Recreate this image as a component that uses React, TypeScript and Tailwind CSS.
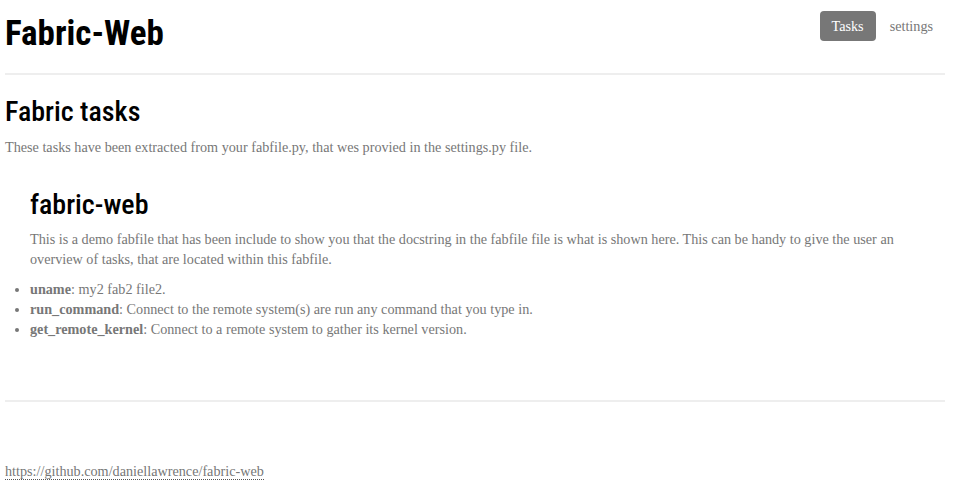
const tasks = [
  { name: "uname", doc: "my2 fab2 file2." },
  { name: "run_command", doc: "Connect to the remote system(s) are run any command that you type in." },
  { name: "get_remote_kernel", doc: "Connect to a remote system to gather its kernel version." },
];

const heading = "font-['Roboto',sans-serif] font-stretch-condensed text-black";

export default function App() {
  return (
    <div className="min-h-[484px] bg-white">
      <div className="ml-[5px] w-[940px] font-['Liberation_Serif',serif] text-[14.2px] leading-[20px] text-[#777]">
        {/* header */}
        <div className="flex items-start justify-between">
          <h1 className={`${heading} mt-[14px] text-[35px] font-bold leading-[40px]`}>Fabric-Web</h1>
          <ul className="mt-[11px] flex gap-[2px]">
            <li>
              <a className="flex h-[30px] items-center rounded-[4px] bg-[#777] px-3 text-white">Tasks</a>
            </li>
            <li>
              <a className="flex h-[30px] items-center rounded-[4px] px-3 text-[#777]">settings</a>
            </li>
          </ul>
        </div>
        <div className="mt-[19px] h-[2px] bg-[#eee]" />

        {/* tasks */}
        <h2 className={`${heading} mt-[20px] mb-[9px] text-[28px] font-medium leading-[33px]`}>Fabric tasks</h2>
        <p>These tasks have been extracted from your fabfile.py, that wes provied in the settings.py file.</p>

        <div className="mt-[31px] pl-[25px]">
          <h2 className={`${heading} mb-[8px] text-[28px] font-medium leading-[33px]`}>fabric-web</h2>
          <p className="mb-[10px]">
            This is a demo fabfile that has been include to show you that the docstring in the fabfile file is what is
            shown here. This can be handy to give the user an overview of tasks, that are located within this fabfile.
          </p>
        </div>
        <ul className="list-disc pl-[25px]">
          {tasks.map((t) => (
            <li key={t.name}>
              <b>{t.name}</b>: {t.doc}
            </li>
          ))}
        </ul>

        <div className="mt-[61px] h-[2px] bg-[#eee]" />

        {/* footer */}
        <div className="mt-[59px]">
          <a className="border-b border-dotted border-[#555] text-[#777]">https://github.com/daniellawrence/fabric-web</a>
        </div>
      </div>
    </div>
  );
}
